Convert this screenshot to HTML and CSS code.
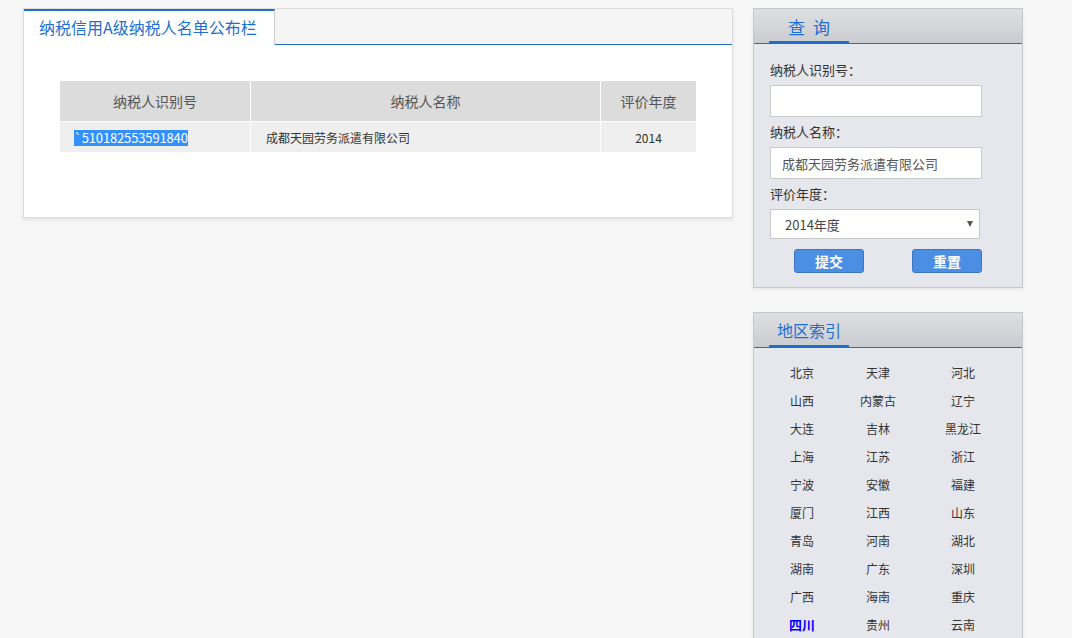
FILE: index.html
```html
<!DOCTYPE html>
<html lang="zh-CN">
<head>
<meta charset="utf-8">
<title>纳税信用A级纳税人名单公布栏</title>
<link rel="stylesheet" href="styles.css">
</head>
<body>
<div class="page">
  <div class="main-panel">
    <div class="main-head">
      <div class="main-tab">纳税信用A级纳税人名单公布栏</div>
    </div>
    <div class="main-body">
      <table class="result">
        <thead>
          <tr>
            <th class="c1">纳税人识别号</th>
            <th class="c2">纳税人名称</th>
            <th class="c3">评价年度</th>
          </tr>
        </thead>
        <tbody>
          <tr>
            <td class="c1"><span class="sel">`510182553591840 </span></td>
            <td class="c2">成都天园劳务派遣有限公司</td>
            <td class="c3">2014</td>
          </tr>
        </tbody>
      </table>
    </div>
  </div>

  <div class="side">
    <div class="box query">
      <div class="box-head"><span class="box-tab center">查 询</span></div>
      <div class="box-body form">
        <label class="lbl">纳税人识别号：</label>
        <input class="inp" type="text" value="">
        <label class="lbl">纳税人名称：</label>
        <input class="inp name" type="text" value="成都天园劳务派遣有限公司">
        <label class="lbl">评价年度：</label>
        <div class="sel-wrap">
          <select class="year"><option>2014年度</option></select>
        </div>
        <div class="btns">
          <button class="btn">提交</button>
          <button class="btn">重置</button>
        </div>
      </div>
    </div>

    <div class="box region">
      <div class="box-head"><span class="box-tab">地区索引</span></div>
      <div class="box-body areas">
        <a>北京</a><a>天津</a><a>河北</a>
        <a>山西</a><a>内蒙古</a><a>辽宁</a>
        <a>大连</a><a>吉林</a><a>黑龙江</a>
        <a>上海</a><a>江苏</a><a>浙江</a>
        <a>宁波</a><a>安徽</a><a>福建</a>
        <a>厦门</a><a>江西</a><a>山东</a>
        <a>青岛</a><a>河南</a><a>湖北</a>
        <a>湖南</a><a>广东</a><a>深圳</a>
        <a>广西</a><a>海南</a><a>重庆</a>
        <a class="cur">四川</a><a>贵州</a><a>云南</a>
      </div>
    </div>
  </div>
</div>
</body>
</html>
```

FILE: styles.css
```css
html, body {
  margin: 0;
  padding: 0;
  background: #f6f6f6;
  font-family: "Noto Sans CJK SC", "Microsoft YaHei", sans-serif;
  color: #333;
  overflow: hidden;
  height: 638px;
}

.page {
  display: flex;
  align-items: flex-start;
  padding: 8px 0 0 23px;
  gap: 20px;
}

/* main panel */
.main-panel {
  width: 708px;
  height: 208px;
  border: 1px solid #dddddd;
  background: #fff;
  box-shadow: 0 2px 3px rgba(0, 0, 0, 0.08);
}

.main-head {
  height: 35px;
  background: #f5f5f5;
  border-bottom: 1px solid #1d6fcf;
  display: flex;
}

.main-tab {
  width: 235px;
  height: 34px;
  padding-left: 15px;
  background: #fff;
  border-top: 2px solid #1d6fcf;
  border-right: 1px solid #d0d0d0;
  color: #1d6fcf;
  font-size: 16px;
  line-height: 32px;
  margin-bottom: -1px;
  white-space: nowrap;
}

.main-body {
  padding: 36px 0 0 36px;
}

.result {
  border-collapse: collapse;
  width: 636px;
  table-layout: fixed;
}

.result th,
.result td {
  padding: 0;
  border-right: 1px solid #fff;
  border-bottom: 1px solid #fff;
}

.result th:last-child,
.result td:last-child {
  border-right: 0;
}

.result th {
  height: 40px;
  background: #dcdcdc;
  font-weight: normal;
  font-size: 14px;
  color: #555;
  text-align: center;
}

.result td {
  height: 30px;
  background: #efefef;
  font-size: 12px;
  color: #333;
}

.result .c1 { width: 190px; }
.result .c2 { width: 349px; }
.result .c3 { width: 95px; }

.result td.c1 { padding-left: 14px; }
.result td.c2 { padding-left: 15px; }
.result td.c3 { text-align: center; }

.sel {
  background: #3390ff;
  color: #fff;
  font-size: 13px;
  line-height: 16px;
  letter-spacing: -0.15px;
  display: inline-block;
}

/* side */
.side {
  display: flex;
  flex-direction: column;
  gap: 24px;
  width: 270px;
}

.box {
  border: 1px solid #c6c7cb;
  background: #e6e7ec;
  box-shadow: 0 2px 3px rgba(0, 0, 0, 0.06);
}

.box-head {
  height: 34px;
  background: linear-gradient(#dedfe3, #cbccd0);
  border-bottom: 1px solid #1d6fcf;
  padding-left: 15px;
  display: flex;
  align-items: flex-end;
}

.box-tab {
  width: 72px;
  padding-left: 8px;
  height: 31px;
  line-height: 33px;
  border-bottom: 3px solid #1d6fcf;
  margin-bottom: -1px;
  color: #1d6fcf;
  font-size: 16px;
}

.box-tab.center {
  width: 80px;
  padding-left: 0;
  text-align: center;
  font-size: 17px;
  letter-spacing: 2px;
  text-indent: 2px;
}

.form {
  padding: 16px 0 14px 16px;
  display: flex;
  flex-direction: column;
  align-items: flex-start;
}

.lbl {
  font-size: 13px;
  color: #333;
  line-height: 20px;
  height: 20px;
  margin-bottom: 5px;
}

.inp {
  box-sizing: border-box;
  width: 212px;
  height: 32px;
  border: 1px solid #c9c9c9;
  background: #fff;
  margin: 0 0 5px 0;
  padding: 0 11px;
  font-family: inherit;
  font-size: 13px;
  color: #555;
  outline: none;
}

.sel-wrap {
  position: relative;
  width: 210px;
  height: 30px;
}

.sel-wrap::after {
  content: "";
  position: absolute;
  right: 7px;
  top: 12px;
  border-left: 3.5px solid transparent;
  border-right: 3.5px solid transparent;
  border-top: 6px solid #555;
}

.year {
  -webkit-appearance: none;
  appearance: none;
  box-sizing: border-box;
  width: 210px;
  height: 30px;
  border: 1px solid #c9c9c9;
  background: #fff;
  padding: 0 14px;
  font-family: inherit;
  font-size: 13px;
  color: #444;
  border-radius: 0;
  outline: none;
}

.btns {
  display: flex;
  gap: 48px;
  padding-left: 24px;
  margin-top: 10px;
}

.btn {
  box-sizing: border-box;
  width: 70px;
  height: 24px;
  background: #4a8fe3;
  border: 1px solid #3e77bf;
  border-radius: 3px;
  color: #fff;
  font-family: inherit;
  font-weight: bold;
  font-size: 14px;
  line-height: 20px;
  padding: 0;
}

.areas {
  display: grid;
  grid-template-columns: 76px 76px 94px;
  grid-auto-rows: 28px;
  padding: 11px 0 30px 10px;
}

.areas a {
  font-size: 12px;
  color: #333;
  text-align: center;
  line-height: 28px;
  cursor: pointer;
}

.areas a.cur {
  color: #0000ff;
  font-weight: bold;
  font-size: 13px;
}
```
